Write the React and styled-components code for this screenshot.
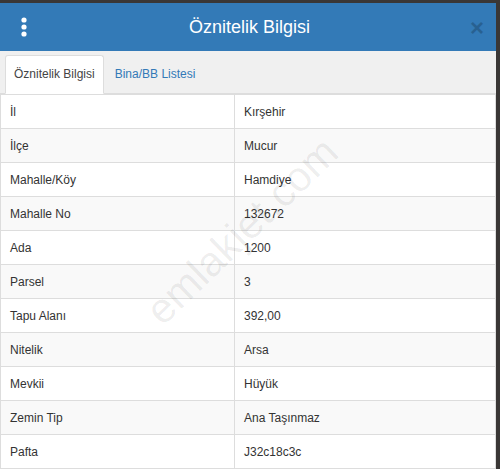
import React from "react";
import styled, { createGlobalStyle } from "styled-components";

const GlobalStyle = createGlobalStyle`
  html, body {
    margin: 0;
    padding: 0;
    background: #3a3736;
    font-family: "Liberation Sans", Arial, sans-serif;
  }
`;

const rows = [
  ["İl", "Kırşehir"],
  ["İlçe", "Mucur"],
  ["Mahalle/Köy", "Hamdiye"],
  ["Mahalle No", "132672"],
  ["Ada", "1200"],
  ["Parsel", "3"],
  ["Tapu Alanı", "392,00"],
  ["Nitelik", "Arsa"],
  ["Mevkii", "Hüyük"],
  ["Zemin Tip", "Ana Taşınmaz"],
  ["Pafta", "J32c18c3c"],
];

const Modal = styled.div`
  position: relative;
  width: 496px;
  height: 466px;
  margin-top: 3px;
  background: #fff;
  overflow: hidden;
`;

const Header = styled.div`
  height: 48px;
  background: #337ab7;
  display: flex;
  align-items: center;
  justify-content: space-between;
  padding: 0 12px 0 19px;
  box-sizing: border-box;
`;

const Title = styled.h4`
  margin: 0;
  color: #fff;
  font-size: 18px;
  font-weight: normal;
  flex: 1;
  text-align: center;
  padding-left: 0;
`;

const MenuButton = styled.button`
  background: none;
  border: 0;
  padding: 0;
  width: 10px;
  display: flex;
  cursor: pointer;
`;

const CloseButton = styled.button`
  background: none;
  border: 0;
  padding: 0;
  font-family: "Liberation Sans", Arial, sans-serif;
  font-size: 24px;
  font-weight: bold;
  line-height: 1;
  color: #000;
  opacity: 0.2;
  margin-top: 2px;
  cursor: pointer;
`;

const TabBar = styled.ul`
  list-style: none;
  margin: 0;
  padding: 5px 0 0 5px;
  height: 43px;
  box-sizing: border-box;
  background: #f0f0f0;
  border-bottom: 1px solid #ddd;
  display: flex;
  align-items: flex-end;
`;

const Tab = styled.li`
  margin-right: 2px;
  margin-bottom: -1px;
  padding: 10px 8px;
  font-size: 12px;
  line-height: 17px;
  border: 1px solid ${(p) => (p.$active ? "#ddd" : "transparent")};
  border-bottom-color: ${(p) => (p.$active ? "#fff" : "transparent")};
  border-radius: 3px 3px 0 0;
  background: ${(p) => (p.$active ? "#fff" : "transparent")};
  color: ${(p) => (p.$active ? "#444" : "#337ab7")};
  cursor: pointer;
`;

const Table = styled.table`
  width: 100%;
  border-collapse: collapse;
  font-size: 12px;
  color: #333;
`;

const Row = styled.tr`
  background: ${(p) => (p.$striped ? "#f9f9f9" : "#fff")};
`;

const Cell = styled.td`
  padding: 9px 8px 7px 9px;
  line-height: 17px;
  border: 1px solid #ddd;
  width: ${(p) => (p.$label ? "216px" : "auto")};
`;

const Watermark = styled.div`
  position: absolute;
  left: 242px;
  top: 228px;
  transform: translate(-50%, -50%) rotate(-44deg);
  font-size: 42px;
  color: rgba(0, 0, 0, 0.07);
  white-space: nowrap;
  pointer-events: none;
  font-family: "Liberation Sans", Arial, sans-serif;
`;

const KebabIcon = () => (
  <svg width="10" height="22" viewBox="0 0 10 22">
    <circle cx="5" cy="4" r="2.6" fill="#fff" />
    <circle cx="5" cy="11" r="2.6" fill="#fff" />
    <circle cx="5" cy="18" r="2.6" fill="#fff" />
  </svg>
);

export default function App() {
  return (
    <>
      <GlobalStyle />
      <Modal>
        <Header>
          <MenuButton>
            <KebabIcon />
          </MenuButton>
          <Title>Öznitelik Bilgisi</Title>
          <CloseButton>×</CloseButton>
        </Header>
        <TabBar>
          <Tab $active>Öznitelik Bilgisi</Tab>
          <Tab>Bina/BB Listesi</Tab>
        </TabBar>
        <Table>
          <tbody>
            {rows.map(([label, value], i) => (
              <Row key={label} $striped={i % 2 === 1}>
                <Cell $label>{label}</Cell>
                <Cell>{value}</Cell>
              </Row>
            ))}
          </tbody>
        </Table>
        <Watermark>emlakjet.com</Watermark>
      </Modal>
    </>
  );
}
